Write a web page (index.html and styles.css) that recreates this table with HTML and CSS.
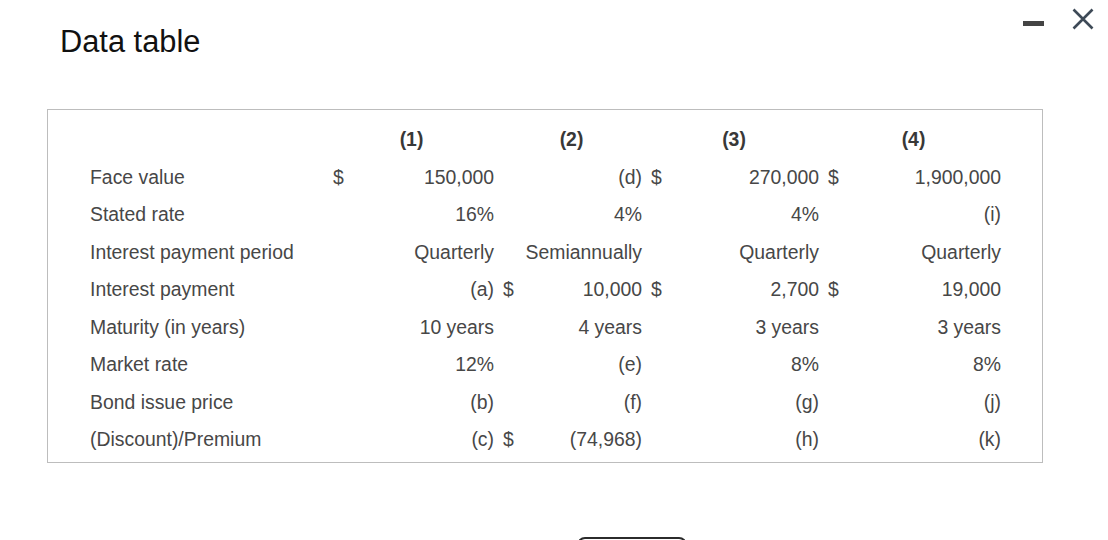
FILE: index.html
```html
<!DOCTYPE html>
<html>
<head>
<meta charset="utf-8">
<link rel="stylesheet" href="styles.css">
</head>
<body>
<div class="dialog">
  <div class="header">
    <h1 class="title">Data table</h1>
    <div class="controls">
      <svg class="ctl" width="21" height="22" viewBox="0 0 21 22"><rect x="0" y="13" width="21" height="5" fill="#444"/></svg>
      <svg class="ctl close" width="22" height="22" viewBox="0 0 22 22"><path d="M1.5 1.5 L20.5 20.5 M20.5 1.5 L1.5 20.5" stroke="#3e4a57" stroke-width="2.6" fill="none"/></svg>
    </div>
  </div>

  <div class="table-box">
    <div class="grid">
      <div class="cell"></div>
      <div class="cell head h1">(1)</div>
      <div class="cell head">(2)</div>
      <div class="cell head">(3)</div>
      <div class="cell head">(4)</div>

      <div class="cell label">Face value</div>
      <div class="cell dol">$</div><div class="cell val">150,000</div>
      <div class="cell dol gap"></div><div class="cell val">(d)</div>
      <div class="cell dol gap">$</div><div class="cell val">270,000</div>
      <div class="cell dol gap">$</div><div class="cell val">1,900,000</div>

      <div class="cell label">Stated rate</div>
      <div class="cell dol"></div><div class="cell val">16%</div>
      <div class="cell dol gap"></div><div class="cell val">4%</div>
      <div class="cell dol gap"></div><div class="cell val">4%</div>
      <div class="cell dol gap"></div><div class="cell val">(i)</div>

      <div class="cell label">Interest payment period</div>
      <div class="cell dol"></div><div class="cell val">Quarterly</div>
      <div class="cell dol gap"></div><div class="cell val">Semiannually</div>
      <div class="cell dol gap"></div><div class="cell val">Quarterly</div>
      <div class="cell dol gap"></div><div class="cell val">Quarterly</div>

      <div class="cell label">Interest payment</div>
      <div class="cell dol"></div><div class="cell val">(a)</div>
      <div class="cell dol gap">$</div><div class="cell val">10,000</div>
      <div class="cell dol gap">$</div><div class="cell val">2,700</div>
      <div class="cell dol gap">$</div><div class="cell val">19,000</div>

      <div class="cell label">Maturity (in years)</div>
      <div class="cell dol"></div><div class="cell val">10 years</div>
      <div class="cell dol gap"></div><div class="cell val">4 years</div>
      <div class="cell dol gap"></div><div class="cell val">3 years</div>
      <div class="cell dol gap"></div><div class="cell val">3 years</div>

      <div class="cell label">Market rate</div>
      <div class="cell dol"></div><div class="cell val">12%</div>
      <div class="cell dol gap"></div><div class="cell val">(e)</div>
      <div class="cell dol gap"></div><div class="cell val">8%</div>
      <div class="cell dol gap"></div><div class="cell val">8%</div>

      <div class="cell label">Bond issue price</div>
      <div class="cell dol"></div><div class="cell val">(b)</div>
      <div class="cell dol gap"></div><div class="cell val">(f)</div>
      <div class="cell dol gap"></div><div class="cell val">(g)</div>
      <div class="cell dol gap"></div><div class="cell val">(j)</div>

      <div class="cell label">(Discount)/Premium</div>
      <div class="cell dol"></div><div class="cell val">(c)</div>
      <div class="cell dol gap">$</div><div class="cell val">(74,968)</div>
      <div class="cell dol gap"></div><div class="cell val">(h)</div>
      <div class="cell dol gap"></div><div class="cell val">(k)</div>
    </div>
  </div>

  <div class="footer">
    <div class="btn"></div>
  </div>
</div>
</body>
</html>
```

FILE: styles.css
```css
html, body {
  margin: 0;
  padding: 0;
  background: #ffffff;
  overflow: hidden;
}

.dialog {
  font-family: "Liberation Sans", Arial, sans-serif;
  width: 1108px;
}

.header {
  display: flex;
  justify-content: space-between;
  align-items: flex-start;
}

.title {
  margin: 25px 0 0 60px;
  font-size: 30.8px;
  line-height: 34px;
  font-weight: normal;
  color: #111111;
}

.controls {
  display: flex;
  gap: 28px;
  margin: 8px 14px 0 0;
}

.ctl {
  display: block;
}

.table-box {
  margin: 50px 0 0 47px;
  border: 1px solid #bdbdbd;
  padding: 11px 0 0 42px;
  box-sizing: content-box;
  width: 952px;
  height: 341px;
}

.grid {
  display: grid;
  grid-template-columns: 243px 12px 149px 21px 127px 22px 155px 21px 161px;
  grid-auto-rows: 37.5px;
  font-size: 19.4px;
  color: #474747;
}

.cell {
  display: flex;
  align-items: center;
  white-space: nowrap;
}

.head {
  grid-column: span 2;
  justify-content: center;
  font-weight: bold;
  color: #383838;
  padding-left: 7px;
}

.head.h1 {
  padding-left: 0;
  padding-right: 4px;
}

.dol {
  justify-content: flex-start;
}

.dol.gap {
  padding-left: 9px;
}

.val {
  justify-content: flex-end;
}

.footer {
  margin-top: 74px;
  padding-left: 577px;
}

.btn {
  width: 110px;
  height: 36px;
  border: 2px solid #2b2b2b;
  border-radius: 8px;
  box-sizing: border-box;
}
```
